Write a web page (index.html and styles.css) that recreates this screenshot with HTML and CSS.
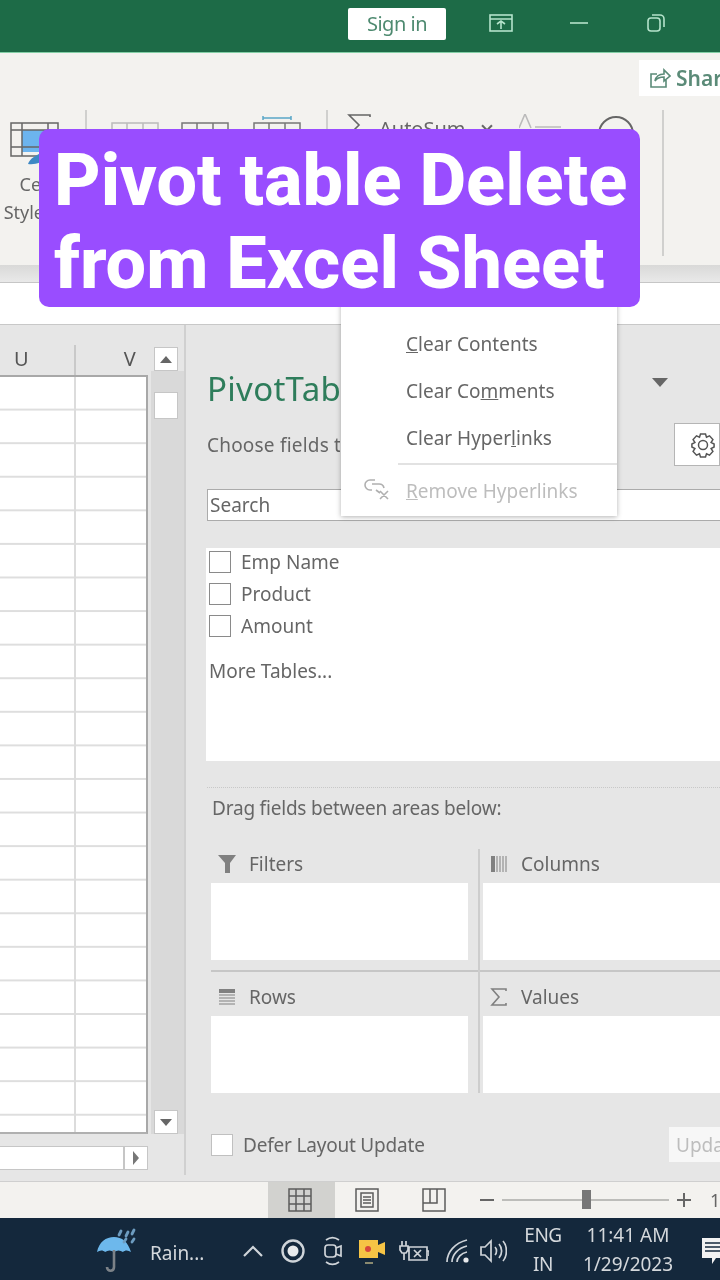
FILE: index.html
```html
<!DOCTYPE html>
<html lang="en">
<head>
    <meta charset="UTF-8">
    <meta name="viewport" content="width=device-width, initial-scale=1.0">
    <title>Pivot table Delete from Excel Sheet</title>
    <link rel="stylesheet" href="styles.css">
</head>
<body>
    <div class="app">
        <header class="titlebar">
            <button class="signin">Sign in</button>
            <svg class="tb-icon tb-display" width="24" height="18" viewBox="0 0 24 18"><rect x="1" y="1" width="22" height="16"/><path d="M1 5h22M12 15V7M8 10l4-3 4 3"/></svg>
            <svg class="tb-icon tb-min" width="18" height="4" viewBox="0 0 18 4"><path d="M0 2h18"/></svg>
            <svg class="tb-icon tb-restore" width="18" height="18" viewBox="0 0 18 18"><rect x="1" y="4" width="12" height="13" rx="3"/><path d="M5 1h8a4 4 0 0 1 4 4v8"/></svg>
        </header>

        <section class="ribbon">
            <div class="share-row">
                <div class="share">
                    <svg width="22" height="22" viewBox="0 0 22 22"><path d="M8 7H2v13h15v-7M6 14c1-5 4-7 9-7V3l6 6-6 5v-4c-4 0-7 1-9 4z"/></svg>
                    <span>Share</span>
                </div>
            </div>
            <div class="tools">
                <div class="cellstyles">
                    <svg width="50" height="44" viewBox="0 0 50 44"><rect x="12" y="8" width="36" height="22" fill="#6cb4ee"/><path d="M1 1h47v33H1zM1 8h47M1 25h47M12 1v33M38 1v33" fill="none" stroke="#666" stroke-width="1.5"/><path d="M18 42c2-6 8-8 14-12l4 6c-4 4-10 7-18 6z" fill="#3d88c4"/></svg>
                    <span>Cell</span>
                    <span>Styles ▾</span>
                </div>
                <div class="rib-sep sep-a"></div>
                <svg class="rib-table tbl-a" width="48" height="30" viewBox="0 0 48 30"><path d="M1 1h46v28H1zM1 10h46M16 1v28M32 1v28"/></svg>
                <svg class="rib-table tbl-b" width="48" height="30" viewBox="0 0 48 30"><path d="M1 1h46v28H1zM1 10h46M16 1v28M32 1v28"/></svg>
                <svg class="rib-table tbl-c" width="48" height="36" viewBox="0 0 48 36"><path class="tbl-top" d="M10 2h28M10 0v4M38 0v4"/><path d="M1 7h46v28H1zM1 16h46M16 7v28M32 7v28"/></svg>
                <div class="rib-sep sep-b"></div>
                <svg class="sigma" width="24" height="22" viewBox="0 0 24 22"><path d="M23 3V1H2l10 10L2 21h21v-2"/></svg>
                <span class="autosum">AutoSum</span>
                <span class="autosum-caret"></span>
                <svg class="sort" width="42" height="16" viewBox="0 0 42 16"><path d="M0 14 6 0l6 14M16 13h26"/></svg>
                <div class="find"></div>
                <div class="rib-sep sep-c"></div>
            </div>
        </section>

        <div class="band"></div>
        <div class="formula"></div>

        <main class="workspace">
            <div class="sheet">
                <div class="col-heads">
                    <span class="col-u">U</span>
                    <span class="col-v">V</span>
                </div>
                <div class="grid"></div>
                <div class="hscroll">
                    <div class="hscroll-track"></div>
                    <button class="scroll-btn hscroll-btn"><i class="arrow arrow-right"></i></button>
                </div>
            </div>

            <div class="vscroll">
                <button class="scroll-btn"><i class="arrow arrow-up"></i></button>
                <div class="thumb"></div>
                <button class="scroll-btn vscroll-down"><i class="arrow arrow-down"></i></button>
            </div>

            <aside class="pane">
                <div class="pane-title">
                    <span class="pane-title-text">PivotTable Fields</span>
                    <i class="arrow arrow-down arrow-big"></i>
                </div>
                <div class="pane-choose">
                    <span class="pane-choose-text">Choose fields to add to report:</span>
                    <div class="gear">
                        <svg width="26" height="26" viewBox="0 0 26 26"><path d="M10.5 2h5l1 3.2 3-1.4 3.4 3.8-1.8 2.9 3 1.500v3l-3 1.500 1.8 2.900-3.400 3.800-3-1.400-1 3.200h-5l-1-3.200-3 1.400-3.400-3.800 1.800-2.900-3-1.500v-3l3-1.500-1.800-2.900 3.400-3.800 3 1.400z"/><circle cx="13" cy="13" r="4.5"/></svg>
                    </div>
                </div>
                <div class="pane-search">Search</div>
                <div class="field-list">
                    <label class="field"><i class="check"></i>Emp Name</label>
                    <label class="field"><i class="check"></i>Product</label>
                    <label class="field"><i class="check"></i>Amount</label>
                    <div class="more">More Tables...</div>
                </div>
                <div class="dots"></div>
                <div class="drag-hint">Drag fields between areas below:</div>

                <div class="areas">
                    <div class="area-col">
                        <div class="area-head">
                            <svg width="20" height="20" viewBox="0 0 20 20"><path d="M1 1h18l-6 8v10H8V9z" fill="#808080"/></svg>
                            <span>Filters</span>
                        </div>
                        <div class="area-box"></div>
                        <div class="area-rule"></div>
                        <div class="area-head">
                            <svg width="20" height="20" viewBox="0 0 20 20"><path d="M2 2h16v4H2z" fill="#808080"/><path d="M2 8h16M2 11h16M2 14h16M2 17h16" stroke="#808080" fill="none"/></svg>
                            <span>Rows</span>
                        </div>
                        <div class="area-box"></div>
                    </div>
                    <div class="area-col area-col-right">
                        <div class="area-head">
                            <svg width="20" height="20" viewBox="0 0 20 20"><path d="M2 2h4v16H2z" fill="#808080"/><path d="M8 2v16M11 2v16M14 2v16M17 2v16" stroke="#808080" fill="none"/></svg>
                            <span>Columns</span>
                        </div>
                        <div class="area-box"></div>
                        <div class="area-rule"></div>
                        <div class="area-head">
                            <svg width="20" height="20" viewBox="0 0 20 20"><path d="M17 4V2H3l7 8-7 8h14v-2" fill="none" stroke="#808080" stroke-width="1.6"/></svg>
                            <span>Values</span>
                        </div>
                        <div class="area-box"></div>
                    </div>
                </div>

                <div class="defer">
                    <label class="defer-label"><i class="check check-soft"></i>Defer Layout Update</label>
                    <button class="update">Update</button>
                </div>
            </aside>
        </main>

        <footer class="statusbar">
            <div class="view view-active">
                <svg width="24" height="24" viewBox="0 0 24 24"><path d="M1 1h22v22H1zM1 8h22M1 16h22M8 1v22M16 1v22"/></svg>
            </div>
            <div class="view">
                <svg width="24" height="24" viewBox="0 0 24 24"><path d="M1 1h22v22H1zM6 5h12v14H6zM8 9h8M8 12h8M8 15h8"/></svg>
            </div>
            <div class="view">
                <svg width="24" height="24" viewBox="0 0 24 24"><path d="M1 1h22v22H1zM1 15h14V1M8 1v14"/></svg>
            </div>
            <span class="zoom-sign zoom-minus"></span>
            <div class="slider"><i class="slider-thumb"></i></div>
            <span class="zoom-sign zoom-plus"></span>
            <span class="zoom-val">100%</span>
        </footer>

        <div class="taskbar">
            <svg class="task-umbrella" width="42" height="46" viewBox="0 0 42 46">
                <path d="M1 25C3 15 10 10 18 10s14 5 17 15c-3-2-6-2-8 0-3-2-6-2-9 0-3-2-6-2-9 0-2-2-5-2-8 0z" fill="#6db8ec"/>
                <path d="M18 23v17c0 5-7 5-7 0" fill="none" stroke="#7c8288" stroke-width="2.6"/>
                <path d="M23 8l2-4M30 9l2-4M36 7l2-4M28 15l2-3M36 15l2-3" stroke="#6d9cc0" stroke-width="2.800" stroke-linecap="round"/>
            </svg>
            <span class="task-weather">Rain...</span>
            <svg class="task-icon task-chevron" width="20" height="12" viewBox="0 0 20 12"><path d="M1 11l9-9 9 9"/></svg>
            <svg class="task-icon task-record" width="24" height="24" viewBox="0 0 24 24"><circle cx="12" cy="12" r="10.5" stroke-width="2.4"/><circle class="task-fill" cx="12" cy="12" r="5.5"/></svg>
            <svg class="task-icon task-meet" width="20" height="30" viewBox="0 0 20 30"><rect x="2" y="9" width="11" height="12" rx="3"/><path d="M13 12l5-2v10l-5-2M3 4c4-3 9-3 13 0M3 26c4 3 9 3 13 0"/></svg>
            <svg class="task-video" width="28" height="28" viewBox="0 0 28 28"><path d="M1 3h19v5l7-3v13l-7-3v6H1z" fill="#f6c445"/><circle cx="10" cy="12" r="3" fill="#d8483c"/><path d="M7 26h8" stroke="#8a8a70" stroke-width="2"/></svg>
            <svg class="task-icon task-power" width="30" height="22" viewBox="0 0 30 22"><path d="M10 7h18v13H10zM28 11h2v5M3 1v5M7 1v5M1 6h8v4l-2 3H3l-2-3zM5 13v7M15 10l7 7M22 10l-7 7"/></svg>
            <svg class="task-icon task-wifi" width="26" height="26" viewBox="0 0 26 26"><path d="M2 24C2 14 10 5 22 2M7 24c0-7 6-14 15-16M12 24c0-4 4-9 10-10"/><circle class="task-fill" cx="21" cy="22" r="2.6"/></svg>
            <svg class="task-icon task-speaker" width="28" height="26" viewBox="0 0 28 26"><path d="M2 9h4l6-6v20l-6-6H2zM16 9c2 2 2 6 0 8M20 6c3.500 4 3.500 10 0 14M24 3c4.500 5 4.500 15 0 20"/></svg>
            <div class="task-lang"><span>ENG</span><span>IN</span></div>
            <div class="task-clock"><span>11:41 AM</span><span>1/29/2023</span></div>
            <svg class="task-note" width="22" height="30" viewBox="0 0 22 30"><path d="M0 2h30v20H14l-4 6v-6H0z" fill="#f2f2f2"/><path d="M3 7h17M3 11h17M3 15h17" stroke="#14283c" stroke-width="1.6"/></svg>
        </div>

        <div class="menu">
            <div class="menu-item"><span><u>C</u>lear Contents</span></div>
            <div class="menu-item"><span>Clear Co<u>m</u>ments</span></div>
            <div class="menu-item"><span>Clear Hyper<u>l</u>inks</span></div>
            <div class="menu-sep"></div>
            <div class="menu-item menu-item-off">
                <svg width="28" height="24" viewBox="0 0 28 24"><path d="M12 3H7a5 5 0 0 0 0 10h2M9 7h7a5 5 0 0 1 5 4M13 13l4 3M17 14l8 8M25 14l-8 8"/></svg>
                <span><u>R</u>emove Hyperlinks</span>
            </div>
        </div>

        <div class="caption">Pivot table Delete<br>from Excel Sheet</div>
    </div>
</body>
</html>
```

FILE: styles.css
```css
* {
    box-sizing: border-box;
}
html, body {
    margin: 0;
    height: 100%;
}
body {
    overflow: hidden;
    font-family: "Noto Sans", "Liberation Sans", sans-serif;
    background: #e6e6e6;
}
button {
    font-family: inherit;
    padding: 0;
}
.app {
    position: relative;
    width: 720px;
    height: 1280px;
    overflow: hidden;
    display: flex;
    flex-direction: column;
    filter: blur(0.45px);
}

/* title bar */
.titlebar {
    height: 53px;
    background: #1d6b47;
    border-bottom: 1px solid #83cfa6;
    display: flex;
    align-items: center;
    flex: none;
}
.signin {
    margin-left: 348px;
    width: 98px;
    height: 32px;
    margin-top: -5px;
    background: #fff;
    border: none;
    border-radius: 2px;
    color: #4e8a70;
    font-size: 20px;
    letter-spacing: -0.5px;
}
.tb-icon {
    fill: none;
    stroke: #b5e3cb;
    stroke-width: 1.6;
    margin-top: -6px;
}
.tb-display {
    margin-left: 43px;
}
.tb-min {
    margin-left: 57px;
}
.tb-restore {
    margin-left: 59px;
}

/* ribbon */
.ribbon {
    height: 212px;
    background: #f3f2ef;
    flex: none;
    padding-top: 7px;
}
.share-row {
    display: flex;
    justify-content: flex-end;
}
.share {
    width: 81px;
    height: 36px;
    background: #fff;
    display: flex;
    align-items: center;
    gap: 5px;
    padding-left: 10px;
    overflow: hidden;
    color: #5b8b78;
    font-size: 21px;
    font-weight: 600;
    white-space: nowrap;
}
.share svg {
    flex: none;
    fill: none;
    stroke: #5b8b78;
    stroke-width: 1.6;
}
.tools {
    display: flex;
    align-items: flex-start;
    margin-top: 14px;
    height: 146px;
}
.cellstyles {
    width: 70px;
    flex: none;
    display: flex;
    flex-direction: column;
    align-items: center;
    padding-top: 12px;
    color: #666;
    font-size: 18px;
    line-height: 28px;
    white-space: nowrap;
}
.cellstyles svg {
    margin-bottom: 4px;
}
.rib-sep {
    width: 2px;
    height: 146px;
    background: #d0d0ce;
    flex: none;
}
.sep-a {
    margin-left: 15px;
}
.sep-b {
    margin-left: 25px;
}
.sep-c {
    margin-left: 28px;
}
.rib-table {
    fill: none;
    stroke: #777;
    stroke-width: 1.5;
    flex: none;
    margin-top: 12px;
}
.tbl-a {
    margin-left: 24px;
    stroke: #bbb;
}
.tbl-b {
    margin-left: 22px;
}
.tbl-c {
    margin-left: 24px;
    margin-top: 6px;
}
.tbl-top {
    stroke: #5aa6c8;
}
.sigma {
    flex: none;
    margin: 4px 0 0 19px;
    fill: none;
    stroke: #666;
    stroke-width: 1.6;
}
.autosum {
    margin: 5px 0 0 8px;
    color: #666;
    font-size: 20px;
    white-space: nowrap;
}
.autosum-caret {
    width: 8px;
    height: 8px;
    margin: 12px 0 0 17px;
    border-right: 2px solid #666;
    border-bottom: 2px solid #666;
    transform: rotate(45deg);
    flex: none;
}
.sort {
    flex: none;
    margin: 4px 0 0 28px;
    fill: none;
    stroke: #bbb;
    stroke-width: 1.6;
}
.find {
    width: 36px;
    height: 36px;
    margin: 6px 0 0 37px;
    border: 2px solid #666;
    border-radius: 50%;
    flex: none;
}
.band {
    height: 18px;
    flex: none;
    background: linear-gradient(#d9d9d8, #e9e9e9);
    border-bottom: 1px solid #c6c6c6;
}
.formula {
    height: 42px;
    flex: none;
    background: #fff;
    border-bottom: 1px solid #c8c8c8;
}

/* sheet */
.workspace {
    height: 856px;
    flex: none;
    display: flex;
    background: #e6e6e6;
}
.sheet {
    width: 148px;
    flex: none;
    display: flex;
    flex-direction: column;
}
.col-heads {
    height: 50px;
    flex: none;
    display: flex;
    align-items: center;
    padding-top: 16px;
    color: #555;
    font-size: 20px;
    background: linear-gradient(#c9c9c9, #c9c9c9) 74px 20px / 2px 30px no-repeat;
}
.col-u {
    margin-left: 14px;
}
.col-v {
    margin-left: 95px;
}
.grid {
    height: 759px;
    flex: none;
    background-color: #fff;
    background-image:
        linear-gradient(to right, transparent 74px, #dcdcdc 74px, #dcdcdc 76px, transparent 76px),
        linear-gradient(to bottom, transparent 31.58px, #dedede 31.58px, #dedede 33.58px);
    background-size: 100% 100%, 100% 33.58px;
    border-top: 2px solid #a8a8a8;
    border-right: 2px solid #a8a8a8;
    border-bottom: 2px solid #b0b0b0;
}
.hscroll {
    margin-top: 12px;
    height: 24px;
    flex: none;
    display: flex;
}
.hscroll-track {
    flex: 1;
    background: #fff;
    border: 1px solid #c6c6c6;
    border-left: none;
}
.scroll-btn {
    width: 24px;
    height: 24px;
    flex: none;
    background: #fff;
    border: 1px solid #c6c6c6;
    display: flex;
    align-items: center;
    justify-content: center;
}
.arrow {
    display: block;
    width: 0;
    height: 0;
    border-style: solid;
    border-color: transparent;
}
.arrow-up {
    border-width: 0 6px 7px;
    border-bottom-color: #666;
}
.arrow-down {
    border-width: 7px 6px 0;
    border-top-color: #666;
}
.arrow-right {
    border-width: 7px 0 7px 6px;
    border-left-color: #777;
}
.vscroll {
    width: 36px;
    flex: none;
    margin-top: 18px;
    margin-bottom: 47px;
    padding-left: 6px;
    padding-right: 6px;
    display: flex;
    flex-direction: column;
    background: linear-gradient(#d9d9d9, #d9d9d9) 3px 28px / 33px 100% no-repeat;
}
.vscroll .scroll-btn {
    margin-top: 4px;
}
.thumb {
    height: 27px;
    margin-top: 21px;
    background: #fff;
    border: 1px solid #c6c6c6;
}
.vscroll .vscroll-down {
    margin-top: auto;
}

/* pivot pane */
.pane {
    width: 536px;
    flex: none;
    border-left: 2px solid #d0d0d0;
    margin-bottom: 6px;
    padding-left: 21px;
    overflow: hidden;
    color: #666;
    font-size: 19px;
}
.pane-title {
    margin-top: 42px;
    height: 42px;
    display: flex;
    align-items: center;
    justify-content: space-between;
    padding-right: 52px;
    color: #2e7d5b;
    font-size: 33px;
    white-space: nowrap;
}
.pane-title-text {
    width: 134px;
    overflow: hidden;
    letter-spacing: 0.3px;
}
.arrow-big {
    border-width: 9px 8px 0;
    border-top-color: #666;
    margin-top: -12px;
}
.pane-choose {
    margin-top: 14px;
    height: 43px;
    display: flex;
    align-items: center;
    justify-content: space-between;
    white-space: nowrap;
}
.pane-choose-text {
    width: 133px;
    overflow: hidden;
    letter-spacing: 0.2px;
}
.gear {
    width: 46px;
    height: 43px;
    background: #fff;
    border: 1px solid #b5b5b5;
    display: flex;
    align-items: center;
    padding-left: 15px;
    flex: none;
}
.gear svg {
    flex: none;
    fill: none;
    stroke: #555;
    stroke-width: 1.5;
}
.pane-search {
    margin-top: 23px;
    margin-right: -4px;
    height: 32px;
    padding-left: 2px;
    display: flex;
    align-items: center;
    background: #fff;
    border: 1px solid #ababab;
}
.field-list {
    margin-top: 27px;
    margin-left: -1px;
    height: 213px;
    padding: 3px 0 0 3px;
    background: #fff;
}
.field {
    height: 22px;
    margin-bottom: 10px;
    display: flex;
    align-items: center;
    gap: 10px;
}
.check {
    width: 22px;
    height: 22px;
    flex: none;
    background: #fff;
    border: 1px solid #8a8a8a;
}
.check-soft {
    border-color: #c0c0c0;
}
.more {
    margin-top: 21px;
    line-height: 26px;
}
.dots {
    margin-top: 26px;
    height: 1px;
    border-top: 1px dotted #c8c8c8;
}
.drag-hint {
    margin-top: 7px;
    margin-left: 5px;
    line-height: 26px;
    letter-spacing: -0.2px;
}
.areas {
    margin-top: 28px;
    margin-left: 4px;
    display: flex;
}
.area-col {
    width: 267px;
    flex: none;
    padding-right: 10px;
}
.area-col-right {
    width: 260px;
    border-left: 2px solid #cdcdcd;
    padding: 0 0 0 3px;
}
.area-head {
    height: 34px;
    display: flex;
    align-items: center;
    gap: 12px;
    padding-left: 6px;
    padding-bottom: 4px;
}
.area-box {
    height: 77px;
    background: #fff;
}
.area-rule {
    height: 22px;
    margin-right: -10px;
    background: linear-gradient(#c6c6c6, #c6c6c6) 0 10px / 100% 2px no-repeat;
}
.area-col-right .area-rule {
    margin: 0 0 0 -3px;
}
.defer {
    margin-top: 34px;
    height: 35px;
    display: flex;
    align-items: center;
    justify-content: space-between;
    padding-left: 4px;
}
.defer-label {
    display: flex;
    align-items: center;
    gap: 10px;
    letter-spacing: -0.2px;
}
.update {
    width: 82px;
    height: 35px;
    flex: none;
    margin-right: -31px;
    background: #f7f7f7;
    border: none;
    color: #bdbdbd;
    font-size: 19px;
    text-align: left;
    padding-left: 7px;
}

/* status bar */
.statusbar {
    height: 37px;
    flex: none;
    background: #f3f2ef;
    border-top: 1px solid #cfcfcf;
    padding-left: 268px;
    display: flex;
    align-items: center;
}
.view {
    width: 67px;
    height: 36px;
    padding-right: 3px;
    display: flex;
    align-items: center;
    justify-content: center;
    flex: none;
}
.view-active {
    background: #d2d2cf;
}
.view svg {
    fill: none;
    stroke: #5c5c5c;
    stroke-width: 1.5;
}
.zoom-sign {
    position: relative;
    width: 14px;
    height: 2px;
    background: #666;
    flex: none;
}
.zoom-minus {
    margin-left: 11px;
}
.zoom-plus {
    margin-left: 8px;
}
.zoom-plus::after {
    content: "";
    position: absolute;
    left: 6px;
    top: -6px;
    width: 2px;
    height: 14px;
    background: #666;
}
.slider {
    position: relative;
    width: 167px;
    height: 2px;
    margin-left: 8px;
    background: #bdbdba;
    flex: none;
}
.slider-thumb {
    position: absolute;
    left: 80px;
    top: -9px;
    width: 9px;
    height: 19px;
    background: #777;
}
.zoom-val {
    margin-left: 19px;
    color: #666;
    font-size: 18px;
    white-space: nowrap;
}

/* taskbar */
.taskbar {
    height: 62px;
    flex: none;
    background: #14283c;
    display: flex;
    align-items: center;
    color: #d4d8dc;
    font-size: 19px;
    padding: 4px 0 0 96px;
    overflow: hidden;
}
.taskbar svg {
    flex: none;
}
.task-umbrella {
    margin-top: -2px;
}
.task-weather {
    margin: 4px 0 0 12px;
    width: 64px;
    flex: none;
}
.task-icon {
    fill: none;
    stroke: #cfd4d9;
    stroke-width: 1.7;
}
.task-fill {
    fill: #e8eaec;
    stroke: none;
}
.task-chevron {
    margin-left: 29px;
    stroke-width: 2.2;
}
.task-record {
    margin-left: 18px;
}
.task-meet {
    margin-left: 18px;
}
.task-video {
    margin-left: 15px;
}
.task-power {
    margin-left: 13px;
}
.task-wifi {
    margin-left: 16px;
}
.task-speaker {
    margin-left: 8px;
}
.task-lang, .task-clock {
    display: flex;
    flex-direction: column;
    align-items: center;
    flex: none;
    line-height: 29px;
    white-space: nowrap;
    margin-top: -2px;
}
.task-lang {
    width: 40px;
    margin-left: 16px;
    letter-spacing: -0.5px;
}
.task-clock {
    width: 88px;
    margin-left: 21px;
}
.task-note {
    margin-left: 30px;
}

/* overlays */
.menu {
    position: absolute;
    left: 341px;
    top: 300px;
    width: 276px;
    height: 216px;
    padding-top: 20px;
    background: #fff;
    box-shadow: 0 1px 5px rgba(0, 0, 0, 0.3);
    color: #666;
    font-size: 19px;
}
.menu-item {
    height: 47px;
    padding-left: 65px;
    display: flex;
    align-items: center;
    white-space: nowrap;
}
.menu-sep {
    height: 2px;
    margin: 2px 0 2px 57px;
    background: #e2e2e2;
}
.menu-item-off {
    height: 48px;
    position: relative;
    color: #bdbdbd;
}
.menu-item-off svg {
    position: absolute;
    left: 22px;
    top: 10px;
    fill: none;
    stroke: #b0b0b0;
    stroke-width: 1.6;
}
.caption {
    position: absolute;
    left: 39px;
    top: 129px;
    width: 601px;
    height: 178px;
    padding: 10px 0 0 15px;
    background: #994dff;
    border-radius: 10px;
    color: #fff;
    font-family: Roboto, "Liberation Sans", sans-serif;
    font-size: 72px;
    font-weight: 800;
    line-height: 83px;
    white-space: nowrap;
}
```
